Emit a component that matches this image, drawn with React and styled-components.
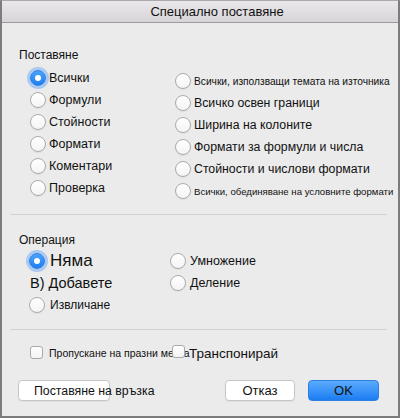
import React from "react";
import styled, { createGlobalStyle, css } from "styled-components";

const Global = createGlobalStyle`
  html, body { margin: 0; padding: 0; background: #ebebeb; }
  body { font-family: "Liberation Sans", Arial, sans-serif; color: #111; }
`;

const Window = styled.div`
  box-sizing: border-box;
  width: 400px;
  height: 418px;
  border: 1px solid #7c7c7c;
  border-top-color: #a9a9a9;
  border-width: 1px 2px 2px 2px;
  background: #ebebeb;
  display: flex;
  flex-direction: column;
`;

const TitleBar = styled.div`
  height: 21px;
  flex: none;
  background: linear-gradient(#e9e7e9, #d7d5d7);
  border-bottom: 1px solid #9c9c9c;
  display: flex;
  align-items: center;
  justify-content: center;
  padding-left: 34px;
  font-size: 13px;
  color: #111;
`;

const Body = styled.div`
  display: flex;
  flex-direction: column;
  padding: 24px 0 0 0;
`;

const SectionLabel = styled.div`
  font-size: 12px;
  line-height: 16px;
  height: 16px;
  padding-left: 17px;
  margin-top: ${p => p.$top || 0}px;
`;

const OptionGrid = styled.div`
  display: grid;
  grid-template-columns: ${p => p.$cols};
  padding-left: ${p => p.$left}px;
  margin-top: ${p => p.$top}px;
`;

const Column = styled.div`
  display: flex;
  flex-direction: column;
  padding-top: ${p => p.$offset || 0}px;
`;

const Option = styled.label`
  display: flex;
  align-items: center;
  height: ${p => p.$h || 22}px;
  gap: ${p => p.$gap || 3}px;
  font-size: ${p => p.$size || 12.5}px;
  white-space: nowrap;
`;

const Radio = styled.span`
  box-sizing: border-box;
  flex: none;
  width: 16px;
  height: 16px;
  border-radius: 50%;
  position: relative;
  ${p =>
    p.$checked
      ? css`
          background: linear-gradient(#4aa3ff, #1f7ff0);
          border: 1px solid #2a7fe0;
          box-shadow: 0 0 0 3px rgba(90, 160, 250, 0.45);
          &::after {
            content: "";
            position: absolute;
            left: 4px;
            top: 4px;
            width: 6px;
            height: 6px;
            border-radius: 50%;
            background: #fff;
          }
        `
      : css`
          background: linear-gradient(#ffffff, #f4f4f4);
          border: 1px solid #ababab;
          box-shadow: 0 1px 1px rgba(0, 0, 0, 0.06);
        `}
`;

const Separator = styled.div`
  height: 1px;
  background: #d2d2d2;
  margin: ${p => p.$top}px 11px 0 8px;
`;

const PlainLine = styled.div`
  height: 22px;
  display: flex;
  align-items: center;
  font-size: ${p => p.$size}px;
  padding-left: ${p => p.$indent}px;
  white-space: nowrap;
`;

const CheckRow = styled.div`
  display: flex;
  align-items: center;
  height: 16px;
  margin-top: 15px;
  padding-left: 28px;
`;

const CheckItem = styled.label`
  display: flex;
  align-items: center;
  gap: ${p => p.$gap}px;
  font-size: ${p => p.$size}px;
  width: ${p => p.$w || "auto"};
  white-space: nowrap;
`;

const Box = styled.span`
  box-sizing: border-box;
  flex: none;
  width: 13px;
  height: 13px;
  border-radius: 3px;
  background: linear-gradient(#ffffff, #f3f3f3);
  border: 1px solid #a9a9a9;
  margin-top: ${p => p.$dy || 0}px;
`;

const ButtonRow = styled.div`
  display: flex;
  align-items: center;
  margin-top: 19px;
  padding: 0 19px 0 16px;
`;

const Button = styled.button`
  box-sizing: border-box;
  height: 21px;
  width: ${p => p.$w}px;
  border-radius: 4px;
  font-family: "Liberation Sans", Arial, sans-serif;
  font-size: ${p => p.$size || 13}px;
  color: #111;
  white-space: nowrap;
  overflow: visible;
  padding: 0;
  ${p =>
    p.$primary
      ? css`
          background: linear-gradient(#5aabfd, #1c7df2);
          border: 1px solid #2d7fe0;
        `
      : css`
          background: #fff;
          border: 1px solid #c6c6c6;
          box-shadow: 0 1px 1px rgba(0, 0, 0, 0.05);
        `}
  ${p =>
    p.$left &&
    css`
      text-align: left;
      padding-left: 15px;
    `}
`;

const Spacer = styled.div`
  flex: 1;
`;

const leftPaste = ["Всички", "Формули", "Стойности", "Формати", "Коментари", "Проверка"];
const rightPaste = [
  ["Всички, използващи темата на източника", 10.2],
  ["Всичко освен граници", 12.3],
  ["Ширина на колоните", 12.3],
  ["Формати за формули и числа", 12.3],
  ["Стойности и числови формати", 12.3],
  ["Всички, обединяване на условните формати", 9.6],
];

export default function App() {
  return (
    <>
      <Global />
      <Window>
        <TitleBar>Специално поставяне</TitleBar>
        <Body>
          <SectionLabel>Поставяне</SectionLabel>
          <OptionGrid $cols="145px 1fr" $left={28} $top={4}>
            <Column>
              {leftPaste.map((t, i) => (
                <Option key={t}>
                  <Radio $checked={i === 0} />
                  {t}
                </Option>
              ))}
            </Column>
            <Column $offset={3}>
              {rightPaste.map(([t, s]) => (
                <Option key={t} $size={s}>
                  <Radio />
                  {t}
                </Option>
              ))}
            </Column>
          </OptionGrid>
          <Separator $top={12} />
          <SectionLabel $top={17}>Операция</SectionLabel>
          <OptionGrid $cols="141px 1fr" $left={27} $top={2}>
            <Column>
              <Option $size={17} $gap={5}>
                <Radio $checked />
                Няма
              </Option>
              <PlainLine $size={14.5} $indent={1}>В) Добавете</PlainLine>
              <Option $size={12} $gap={5}>
                <Radio />
                Извличане
              </Option>
            </Column>
            <Column $offset={0}>
              <Option $size={12.5} $gap={4}>
                <Radio />
                Умножение
              </Option>
              <Option $size={12.5} $gap={4}>
                <Radio />
                Деление
              </Option>
            </Column>
          </OptionGrid>
          <Separator $top={13} />
          <CheckRow>
            <CheckItem $gap={6} $size={10.5} $w="142px">
              <Box $dy={-1} />
              Пропускане на празни места
            </CheckItem>
            <CheckItem $gap={4} $size={13.5}>
              <Box $dy={-3} />
              Транспонирай
            </CheckItem>
          </CheckRow>
          <ButtonRow>
            <Button $w={92} $left $size={12.3}>Поставяне на връзка</Button>
            <Spacer />
            <Button $w={70}>Отказ</Button>
            <Button $w={71} $primary style={{ marginLeft: 13 }}>OK</Button>
          </ButtonRow>
        </Body>
      </Window>
    </>
  );
}
